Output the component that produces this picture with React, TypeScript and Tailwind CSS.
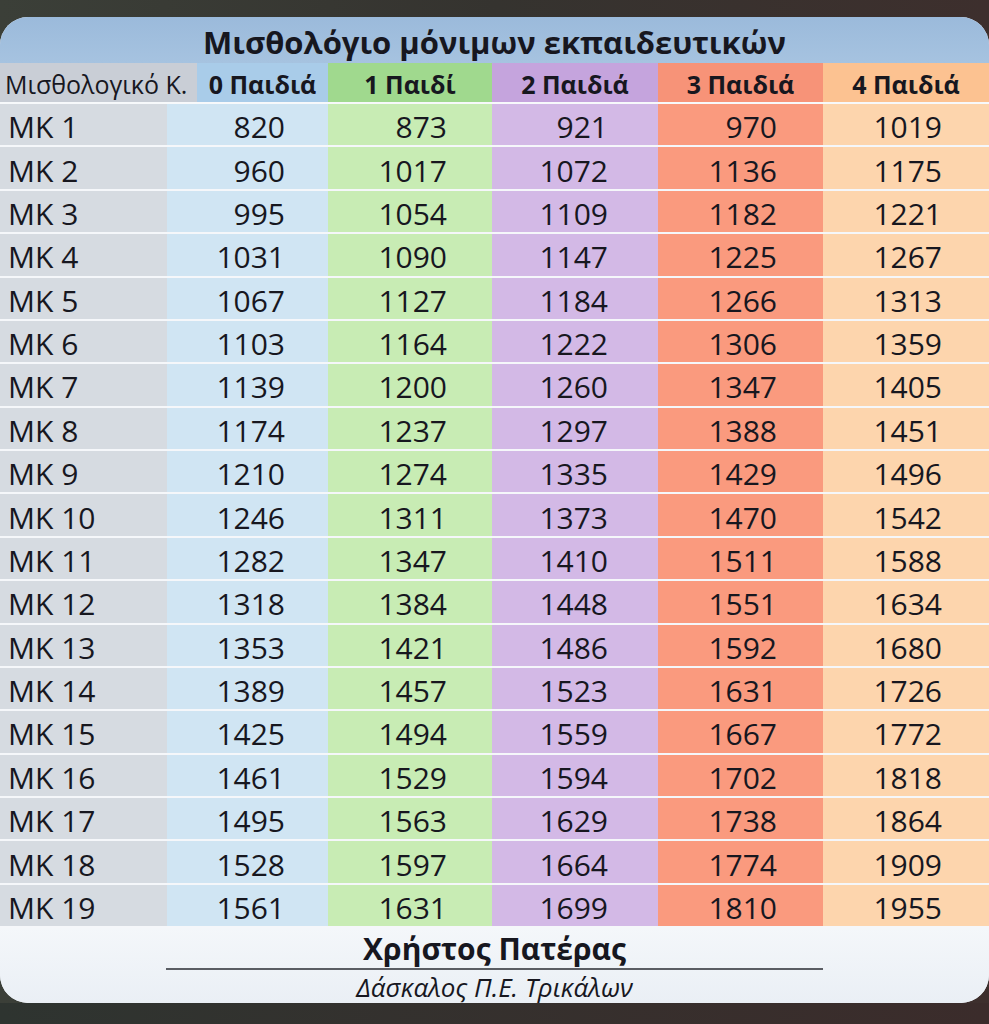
import React from "react";

const data: number[][] = [
  [820, 873, 921, 970, 1019],
  [960, 1017, 1072, 1136, 1175],
  [995, 1054, 1109, 1182, 1221],
  [1031, 1090, 1147, 1225, 1267],
  [1067, 1127, 1184, 1266, 1313],
  [1103, 1164, 1222, 1306, 1359],
  [1139, 1200, 1260, 1347, 1405],
  [1174, 1237, 1297, 1388, 1451],
  [1210, 1274, 1335, 1429, 1496],
  [1246, 1311, 1373, 1470, 1542],
  [1282, 1347, 1410, 1511, 1588],
  [1318, 1384, 1448, 1551, 1634],
  [1353, 1421, 1486, 1592, 1680],
  [1389, 1457, 1523, 1631, 1726],
  [1425, 1494, 1559, 1667, 1772],
  [1461, 1529, 1594, 1702, 1818],
  [1495, 1563, 1629, 1738, 1864],
  [1528, 1597, 1664, 1774, 1909],
  [1561, 1631, 1699, 1810, 1955],
];

const cellCls = [
  "bg-[#d0e5f3] pr-[43px]",
  "bg-[#c8ecb4] pr-[45px]",
  "bg-[#d3b9e6] pr-[50px]",
  "bg-[#fa9a7e] pr-[46px]",
  "bg-[#fdd5ad] pr-[47px]",
];

export default function App() {
  return (
    <div
      className="w-[989px] h-[1024px] flex flex-col bg-gradient-to-r from-[#3b3f38] via-[#35332f] to-[#3d2f2d] text-[#17171f]"
      style={{ fontFamily: '"Open Sans", "Noto Sans", sans-serif' }}
    >
      <div className="h-[17px] shrink-0" />
      <div className="w-[989px] h-[986px] rounded-[28px] overflow-hidden bg-[#eef2f7] flex flex-col">
        {/* Title */}
        <div className="h-[46px] shrink-0 bg-gradient-to-b from-[#9bbadb] to-[#a6c3e0] flex items-center justify-center pt-[4px]">
          <span className="text-[31px] font-bold leading-none">Μισθολόγιο μόνιμων εκπαιδευτικών</span>
        </div>
        {/* Header */}
        <div className="h-[41px] shrink-0 grid grid-cols-[197px_131px_164px_166px_165px_1fr] border-b-2 border-white/50">
          <div className="bg-[#c9ced6] flex items-center pl-[5px] pt-[4px] text-[25px] leading-none">Μισθολογικό Κ.</div>
          <div className="bg-[#a9cce9] flex items-center justify-center pt-[4px] text-[25px] font-bold leading-none">0 Παιδιά</div>
          <div className="bg-[#a0d98e] flex items-center justify-center pt-[4px] text-[25px] font-bold leading-none">1 Παιδί</div>
          <div className="bg-[#c5a4dd] flex items-center justify-center pt-[4px] text-[25px] font-bold leading-none">2 Παιδιά</div>
          <div className="bg-[#f79378] flex items-center justify-center pt-[4px] text-[25px] font-bold leading-none">3 Παιδιά</div>
          <div className="bg-[#fcc291] flex items-center justify-center pt-[4px] text-[25px] font-bold leading-none">4 Παιδιά</div>
        </div>
        {/* Body */}
        <div className="flex flex-col h-[824px] shrink-0">
          {data.map((row, i) => (
            <div
              key={i}
              className="flex-1 grid grid-cols-[167px_161px_164px_166px_165px_1fr] border-b-2 border-white/40"
            >
              <div className="bg-[#d6dbe1] flex items-center pl-[8px] pt-[5px] text-[30px] leading-none">ΜΚ {i + 1}</div>
              {row.map((v, j) => (
                <div key={j} className={`${cellCls[j]} flex items-center justify-end pt-[5px] text-[30px] leading-none`}>
                  {v}
                </div>
              ))}
            </div>
          ))}
        </div>
        {/* Footer */}
        <div className="flex-1 flex flex-col items-center bg-gradient-to-b from-[#f4f7fa] to-[#eaeff5]">
          <div className="h-[40px] flex items-end pb-[4px] text-[30px] font-bold leading-none">Χρήστος Πατέρας</div>
          <div className="w-[657px] h-[2px] shrink-0 bg-[#5a5d63] ml-[-1px]" />
          <div className="flex-1 flex items-center italic text-[26px] leading-[32px]">Δάσκαλος Π.Ε. Τρικάλων</div>
        </div>
      </div>
      <div className="flex-1 bg-gradient-to-r from-[#2e3430] to-[#3b2c2b]" />
    </div>
  );
}
